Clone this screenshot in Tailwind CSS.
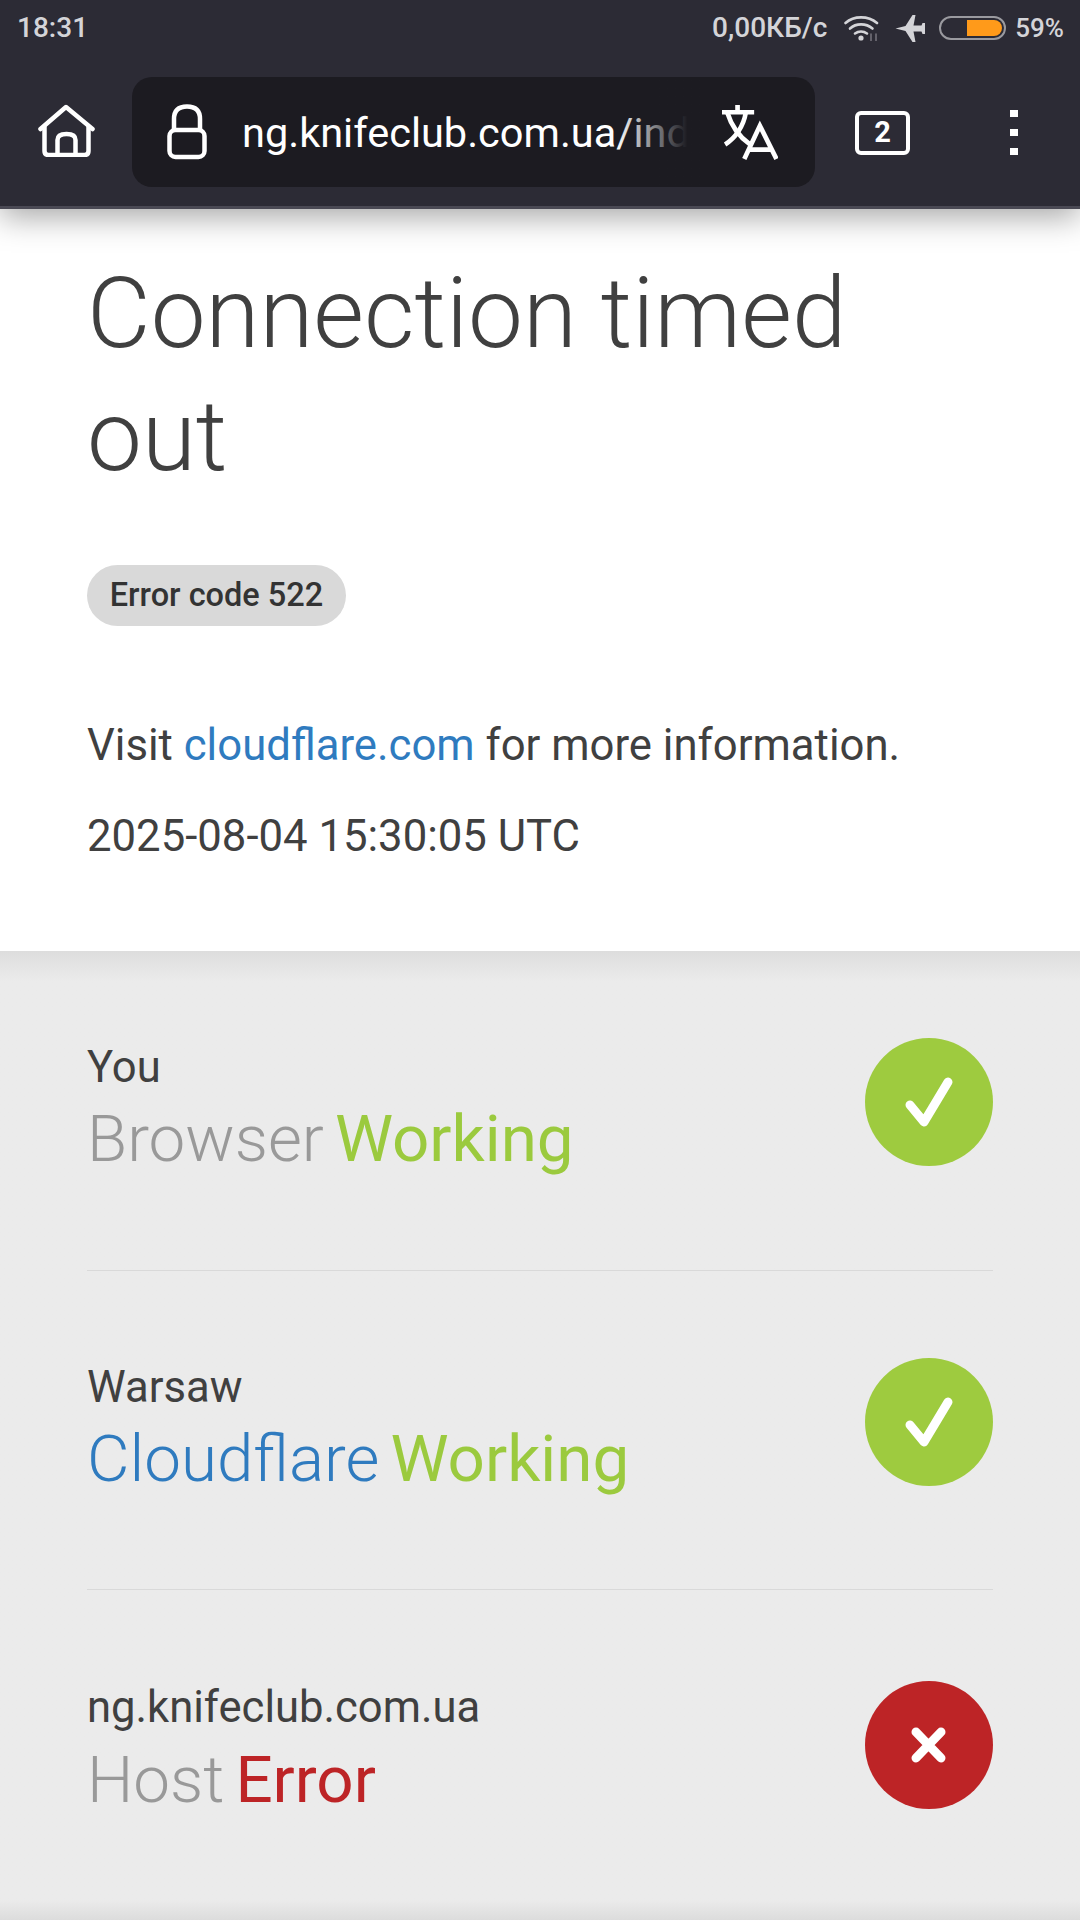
<!DOCTYPE html>
<html lang="en">
<head>
  <meta charset="UTF-8">
  <title>Connection timed out</title>
  <script src="https://cdn.jsdelivr.net/npm/@tailwindcss/browser@4"></script>
</head>
<body class="w-[1080px] h-[1920px] overflow-hidden bg-white font-['Roboto',sans-serif] text-[#404040]">
  <!-- browser chrome -->
  <header class="relative z-10 h-[209px] bg-[#2c2b35] border-b-[3px] border-[#4a4954] shadow-[0_8px_30px_rgba(0,0,0,0.35)]">
    <div class="h-[56px] pl-[17px] pr-[16px] flex items-center text-[#d4d4d8] text-[28px] font-medium">
      <span>18:31</span>
      <div class="ml-auto flex items-center">
        <span>0,00КБ/с</span>
        <svg class="ml-[17px]" width="35" height="25" viewBox="0 0 35 25" fill="none" stroke="#d4d4d8" stroke-width="2.600" stroke-linecap="round">
          <path d="M1.500 7C10 -0.500 24 -0.500 33 7"/>
          <path d="M6 12.500C12 7 22 7 28.500 12.500"/>
          <path d="M11 17.500C14.500 15 19.500 15 23 17.500"/>
          <circle cx="17" cy="22" r="2.600" fill="#d4d4d8" stroke="none"/>
          <path d="M27 18v7M32 18v7" stroke="#77767e" stroke-width="1.500"/>
        </svg>
        <svg class="ml-[16px]" width="31" height="27" viewBox="0 0 30 27" fill="#d4d4d8">
          <path d="M0 13.500L10 11L17 0H20L18 10.500H26L27 8H29.500V19H27L26 16.500H18L20 27H17L10 16Z"/>
        </svg>
        <div class="ml-[13px] w-[67px] h-[24px] rounded-full border-2 border-[#9a9a9f] p-[2px] flex justify-end">
          <div class="w-[35px] h-full bg-[#ff9a1a] rounded-r-full"></div>
        </div>
        <span class="ml-[9px] text-[26px]">59%</span>
      </div>
    </div>
    <div class="h-[150px] flex items-start pt-[21px]">
      <svg class="ml-[38px] mt-[27px]" width="57" height="53" viewBox="0 0 56 53" fill="none" stroke="white" stroke-width="4.500" stroke-linejoin="round" stroke-linecap="round">
        <path d="M2 25L27.500 3L54 25"/>
        <path d="M6 23V47Q6 51 10 51H46Q50 51 50 47V23"/>
        <path d="M19 51V36Q19 30 28 30Q37 30 37 36V51"/>
      </svg>
      <div class="ml-[37px] w-[683px] h-[110px] rounded-[20px] bg-[#1c1b21] flex items-center relative">
        <svg class="ml-[34px]" width="42" height="56" viewBox="0 0 40 56" fill="none" stroke="white" stroke-width="4.500">
          <path d="M7 26V15C7 6 12 2.500 20 2.500C28 2.500 33 6 33 15V26"/>
          <rect x="2.500" y="26" width="35" height="27" rx="6"/>
        </svg>
        <div class="ml-[34px] pt-[3px] w-[442px] whitespace-nowrap text-[41.500px] text-white font-normal">ng.knifeclub.com.ua/ind</div>
        <div class="absolute left-[484px] top-0 w-[84px] h-full bg-linear-to-r from-transparent to-[#1c1b21] to-85%"></div>
        <svg class="absolute left-[590px] top-[28px]" width="56" height="56" viewBox="0 0 54 54" fill="none" stroke="white" stroke-width="4.500">
          <path d="M0 7H31M15 0V7"/>
          <path d="M5 7C9 20 17 31 27 38"/>
          <path d="M23 7C21 20 13 32 3 38"/>
          <path d="M21.500 52L36.500 20L52.500 52M25 43H49"/>
        </svg>
      </div>
      <div class="ml-[40px] mt-[34px] w-[55px] h-[44px] rounded-[6px] border-[4px] border-white flex items-center justify-center text-white text-[29px] font-bold">2</div>
      <div class="ml-[100px] mt-[33px] flex flex-col gap-[12px]">
        <div class="w-[8px] h-[7px] bg-white"></div>
        <div class="w-[8px] h-[7px] bg-white"></div>
        <div class="w-[8px] h-[7px] bg-white"></div>
      </div>
    </div>
  </header>

  <!-- error heading -->
  <main class="h-[742px] px-[87px] pt-[43px]">
    <h1 class="text-[98px] leading-[123px] font-light">Connection timed out</h1>
    <div class="mt-[67px] w-[259px] h-[61px] rounded-full bg-[#d9d9d9] flex items-center justify-center text-[#333333] text-[32.500px] font-medium">Error code 522</div>
    <p class="mt-[89px] text-[43.700px] leading-[60px]">Visit <a class="text-[#2f7bbf]">cloudflare.com</a> for more information.</p>
    <p class="mt-[31px] text-[43.700px] leading-[60px]">2025-08-04 15:30:05 UTC</p>
  </main>

  <!-- status rows -->
  <section class="h-[969px] px-[87px] bg-linear-to-b from-[#dddddd] to-[#ebebeb] to-[30px] relative">
    <div class="h-[320px] pt-[87px] border-b border-[#d9d9d9] flex justify-between items-start">
      <div class="mt-[5px]">
        <div class="text-[43.600px] leading-[50px]">You</div>
        <div class="mt-[9px] flex gap-[11px] text-[65.500px] leading-[74px]"><span class="font-light text-[#999999]">Browser</span><span class="text-[#9bca3e]">Working</span></div>
      </div>
      <div class="w-[128px] h-[128px] rounded-full bg-[#9ecb3f] shrink-0">
        <svg width="128" height="128" viewBox="0 0 128 128" fill="none" stroke="white" stroke-width="9" stroke-linecap="round" stroke-linejoin="round"><path d="M45 67L59 84L83 44"/></svg>
      </div>
    </div>
    <div class="h-[319px] pt-[87px] border-b border-[#d9d9d9] flex justify-between items-start">
      <div class="mt-[5px]">
        <div class="text-[43.600px] leading-[50px]">Warsaw</div>
        <div class="mt-[9px] flex gap-[11px] text-[65.500px] leading-[74px]"><span class="font-light text-[#2f7bbf]">Cloudflare</span><span class="text-[#9bca3e]">Working</span></div>
      </div>
      <div class="w-[128px] h-[128px] rounded-full bg-[#9ecb3f] shrink-0">
        <svg width="128" height="128" viewBox="0 0 128 128" fill="none" stroke="white" stroke-width="9" stroke-linecap="round" stroke-linejoin="round"><path d="M45 67L59 84L83 44"/></svg>
      </div>
    </div>
    <div class="pt-[91px] flex justify-between items-start">
      <div class="mt-[2px]">
        <div class="text-[43.600px] leading-[50px]">ng.knifeclub.com.ua</div>
        <div class="mt-[10px] flex gap-[11px] text-[65.500px] leading-[74px]"><span class="font-light text-[#999999]">Host</span><span class="text-[#bd2426]">Error</span></div>
      </div>
      <div class="w-[128px] h-[128px] rounded-full bg-[#bd2426] shrink-0">
        <svg width="128" height="128" viewBox="0 0 128 128" fill="none" stroke="white" stroke-width="9" stroke-linecap="round"><path d="M51 51L76 77M76 51L51 77"/></svg>
      </div>
    </div>
    <div class="absolute left-0 right-0 bottom-0 h-[20px] bg-linear-to-b from-[#ebebeb] to-[#dcdcdc]"></div>
  </section>
</body>
</html>
